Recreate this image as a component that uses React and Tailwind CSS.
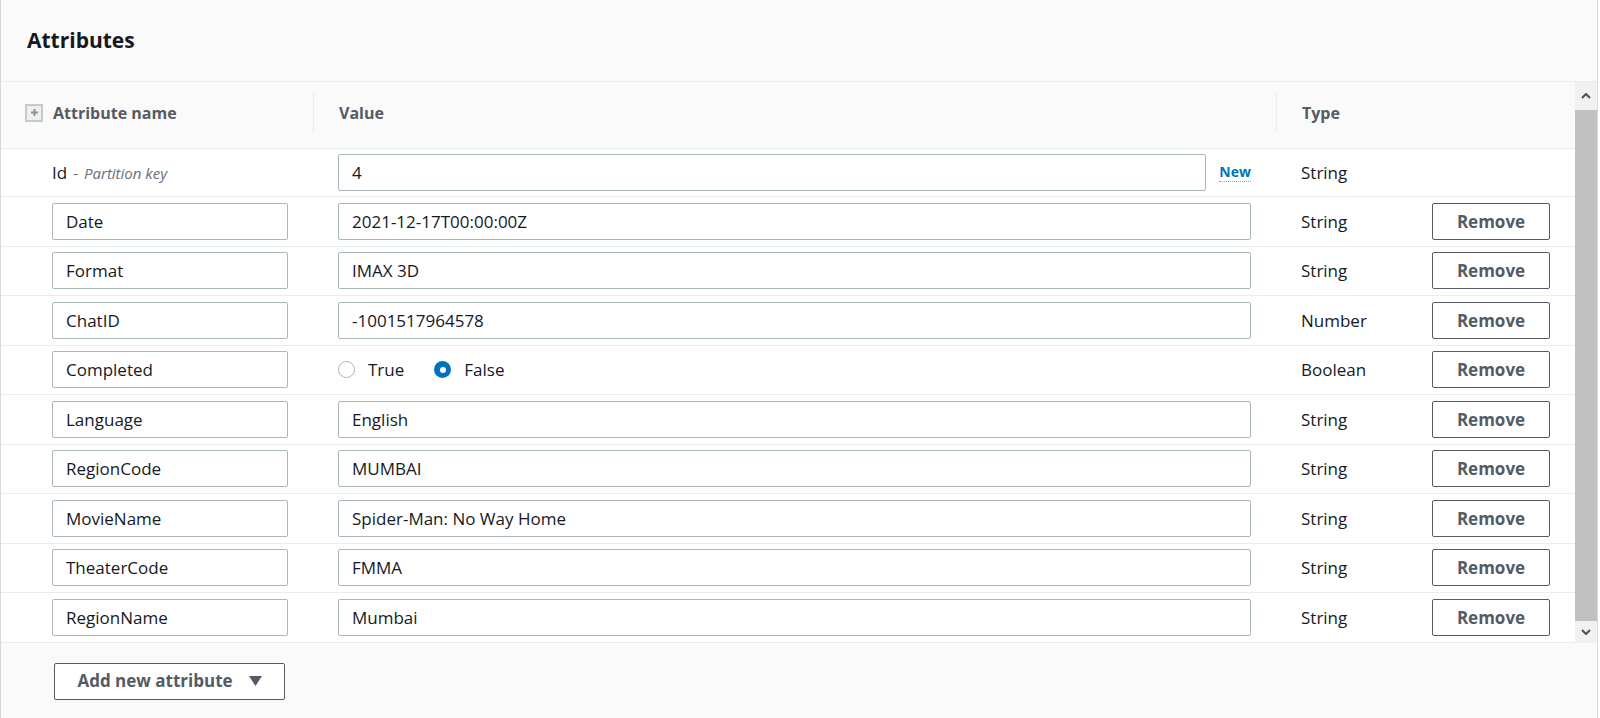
import React, { useState } from "react";

const rows = [
  { name: "Date", type: "String", value: "2021-12-17T00:00:00Z" },
  { name: "Format", type: "String", value: "IMAX 3D" },
  { name: "ChatID", type: "Number", value: "-1001517964578" },
  { name: "Completed", type: "Boolean", bool: false },
  { name: "Language", type: "String", value: "English" },
  { name: "RegionCode", type: "String", value: "MUMBAI" },
  { name: "MovieName", type: "String", value: "Spider-Man: No Way Home" },
  { name: "TheaterCode", type: "String", value: "FMMA" },
  { name: "RegionName", type: "String", value: "Mumbai" },
];

const Radio = ({ checked, label, onClick }) => (
  <button onClick={onClick} className="flex items-center gap-[13px]">
    {checked ? (
      <span className="w-[17px] h-[17px] rounded-full bg-[#0073bb] flex items-center justify-center">
        <span className="w-[6px] h-[6px] rounded-full bg-white" />
      </span>
    ) : (
      <span className="w-[17px] h-[17px] rounded-full border border-[#aab7b8] bg-white" />
    )}
    <span className="text-[17px] text-[#16191f]">{label}</span>
  </button>
);

const Chevron = ({ up }) => (
  <svg width="10" height="6" viewBox="0 0 10 6">
    <path
      d={up ? "M1 5 L5 1 L9 5" : "M1 1 L5 5 L9 1"}
      fill="none"
      stroke="#505050"
      strokeWidth="2"
    />
  </svg>
);

const App = () => {
  const [items, setItems] = useState(rows);

  const setBool = (i, v) =>
    setItems(items.map((r, j) => (j === i ? { ...r, bool: v } : r)));

  return (
    <div className="w-[1598px] h-[718px] border-l border-r border-[#d5dbdb] bg-[#fafafa] font-['Open_Sans',sans-serif] text-[#16191f] overflow-hidden">
      {/* title */}
      <div className="h-[82px] flex items-center pl-[26px] border-b border-[#eaeded]">
        <h2 className="text-[21px] font-bold">Attributes</h2>
      </div>

      <div className="flex">
        <div className="flex-1">
          {/* column headers */}
          <div className="h-[67px] grid grid-cols-[312px_963px_1fr] items-center border-b border-[#eaeded] pb-[5px] text-[16px] font-bold text-[#545b64]">
            <div className="flex items-center pl-[24px] gap-[10px]">
              <span className="w-[18px] h-[18px] border-2 border-[#c4c9cc] bg-[#eef0f0] flex items-center justify-center">
                <svg width="9" height="9" viewBox="0 0 9 9">
                  <path d="M4.5 1 V8 M1 4.5 H8" stroke="#8d9597" strokeWidth="2" />
                </svg>
              </span>
              Attribute name
            </div>
            <div className="h-[40px] border-l border-[#eaeded] flex items-center pl-[25px]">
              Value
            </div>
            <div className="h-[40px] border-l border-[#eaeded] flex items-center pl-[25px]">
              Type
            </div>
          </div>

          {/* partition key */}
          <div className="h-[48px] grid grid-cols-[312px_963px_1fr] items-center border-b border-[#eaeded] bg-white">
            <div className="pl-[51px] flex items-baseline gap-[6px]">
              <span className="text-[17px]">Id</span>
              <span className="text-[#687078] text-[15px]">-</span>
              <span className="text-[#687078] text-[15px] italic">Partition key</span>
            </div>
            <div className="pl-[25px] pr-[25px] flex items-center">
              <input
                defaultValue="4"
                className="flex-1 h-[37px] border border-[#aab7b8] rounded-[2px] px-[13px] text-[17px] outline-none"
              />
              <span className="ml-[13px] text-[14px] font-bold text-[#0073bb] border-b border-dotted border-[#7fa9c9] leading-[18px]">
                New
              </span>
            </div>
            <div className="pl-[25px] text-[17px]">String</div>
          </div>

          {items.map((r, i) => (
            <div
              key={r.name}
              className="h-[49.5px] grid grid-cols-[312px_963px_1fr] items-center border-b border-[#eaeded] bg-white"
            >
              <div className="pl-[51px]">
                <input
                  defaultValue={r.name}
                  className="w-[236px] h-[37px] border border-[#aab7b8] rounded-[2px] px-[13px] text-[17px] outline-none"
                />
              </div>
              <div className="pl-[25px] pr-[25px]">
                {r.type === "Boolean" ? (
                  <div className="flex items-center gap-[30px]">
                    <Radio label="True" checked={r.bool} onClick={() => setBool(i, true)} />
                    <Radio label="False" checked={!r.bool} onClick={() => setBool(i, false)} />
                  </div>
                ) : (
                  <input
                    defaultValue={r.value}
                    className="w-full h-[37px] border border-[#aab7b8] rounded-[2px] px-[13px] text-[17px] outline-none"
                  />
                )}
              </div>
              <div className="pl-[25px] pr-[25px] flex items-center justify-between">
                <span className="text-[17px]">{r.type}</span>
                <button
                  onClick={() => setItems(items.filter((_, j) => j !== i))}
                  className="w-[118px] h-[37px] border border-[#545b64] rounded-[2px] text-[17px] font-bold text-[#545b64] bg-white"
                >
                  Remove
                </button>
              </div>
            </div>
          ))}
        </div>

        {/* scrollbar */}
        <div className="w-[22px] flex flex-col bg-[#f1f1f1]">
          <div className="h-[28px] flex items-center justify-center">
            <Chevron up />
          </div>
          <div className="flex-1 bg-[#c1c1c1]" />
          <div className="h-[22px] flex items-center justify-center">
            <Chevron />
          </div>
        </div>
      </div>

      {/* footer */}
      <div className="pt-[20px] pl-[53px]">
        <button className="w-[231px] h-[37px] border border-[#545b64] rounded-[2px] bg-white flex items-center justify-center gap-[16px] text-[17px] font-bold text-[#545b64]">
          Add new attribute
          <svg width="13" height="10" viewBox="0 0 13 10">
            <path d="M0 0 H13 L6.5 10 Z" fill="#545b64" />
          </svg>
        </button>
      </div>
    </div>
  );
};

export default App;
